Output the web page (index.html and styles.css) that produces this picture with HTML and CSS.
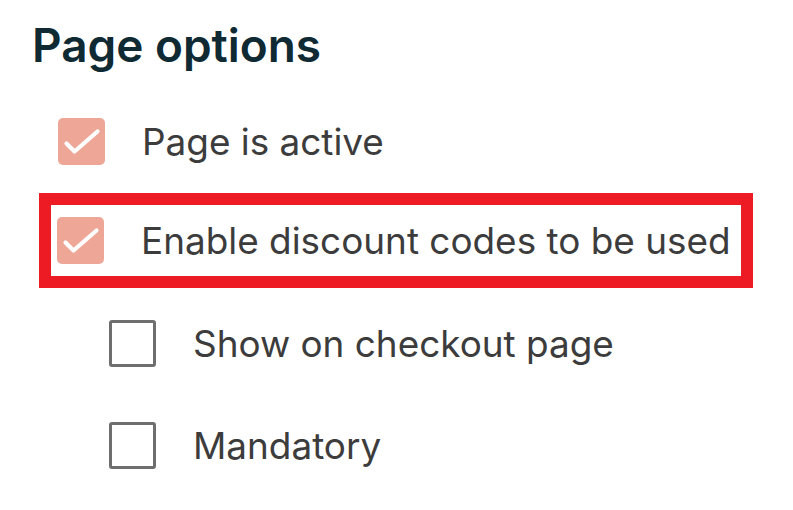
FILE: index.html
```html
<!DOCTYPE html>
<html>
<head>
<meta charset="utf-8">
<link rel="stylesheet" href="styles.css">
</head>
<body>
<div class="panel">
  <h2 class="title">Page options</h2>
  <div class="options">
    <div class="row row-first">
      <span class="box box-checked"><svg viewBox="0 0 47 47" width="47" height="47"><path d="M8.5 25.5 L16.5 33.5 L39.5 13.5" fill="none" stroke="#fff" stroke-width="4.2" stroke-linecap="round" stroke-linejoin="round"/></svg></span>
      <span class="label">Page is active</span>
    </div>
    <div class="highlight">
      <div class="row">
        <span class="box box-checked"><svg viewBox="0 0 47 47" width="47" height="47"><path d="M8.5 25.5 L16.5 33.5 L39.5 13.5" fill="none" stroke="#fff" stroke-width="4.2" stroke-linecap="round" stroke-linejoin="round"/></svg></span>
        <span class="label">Enable discount codes to be used</span>
      </div>
    </div>
    <div class="row sub row-third">
      <span class="box box-empty"></span>
      <span class="label">Show on checkout page</span>
    </div>
    <div class="row sub row-fourth">
      <span class="box box-empty"></span>
      <span class="label">Mandatory</span>
    </div>
  </div>
</div>
</body>
</html>
```
FILE: styles.css
```css
html, body {
  margin: 0;
  padding: 0;
  background: #ffffff;
}
.panel {
  padding-top: 18px;
  font-family: Inter, "Noto Sans", sans-serif;
}
.title {
  margin: 0 0 0 32px;
  font-size: 45.9px;
  line-height: 56px;
  font-weight: 600;
  color: #0f2a33;
}
.options {
  display: flex;
  flex-direction: column;
  margin-top: 44px;
}
.row {
  display: flex;
  align-items: center;
  gap: 37px;
  height: 47px;
}
.row-first {
  margin-left: 58px;
}
.highlight {
  margin-top: 28px;
  margin-left: 39px;
  width: 714px;
  box-sizing: border-box;
  border: 12.5px solid #ed1c24;
  height: 95px;
  display: flex;
  align-items: center;
  padding-left: 6px;
}
.sub {
  margin-left: 109px;
}
.row-third {
  margin-top: 32px;
}
.row-fourth {
  margin-top: 55px;
}
.box {
  width: 47px;
  height: 47px;
  box-sizing: border-box;
  border-radius: 5px;
  flex: none;
  display: block;
}
.box svg {
  display: block;
}
.box-checked {
  background: #eea697;
}
.box-empty {
  border: 3.5px solid #6e6e6e;
  border-radius: 3px;
  background: #fff;
}
.label {
  font-size: 36.9px;
  color: #3c3c3c;
  line-height: 47px;
  white-space: nowrap;
}
```
